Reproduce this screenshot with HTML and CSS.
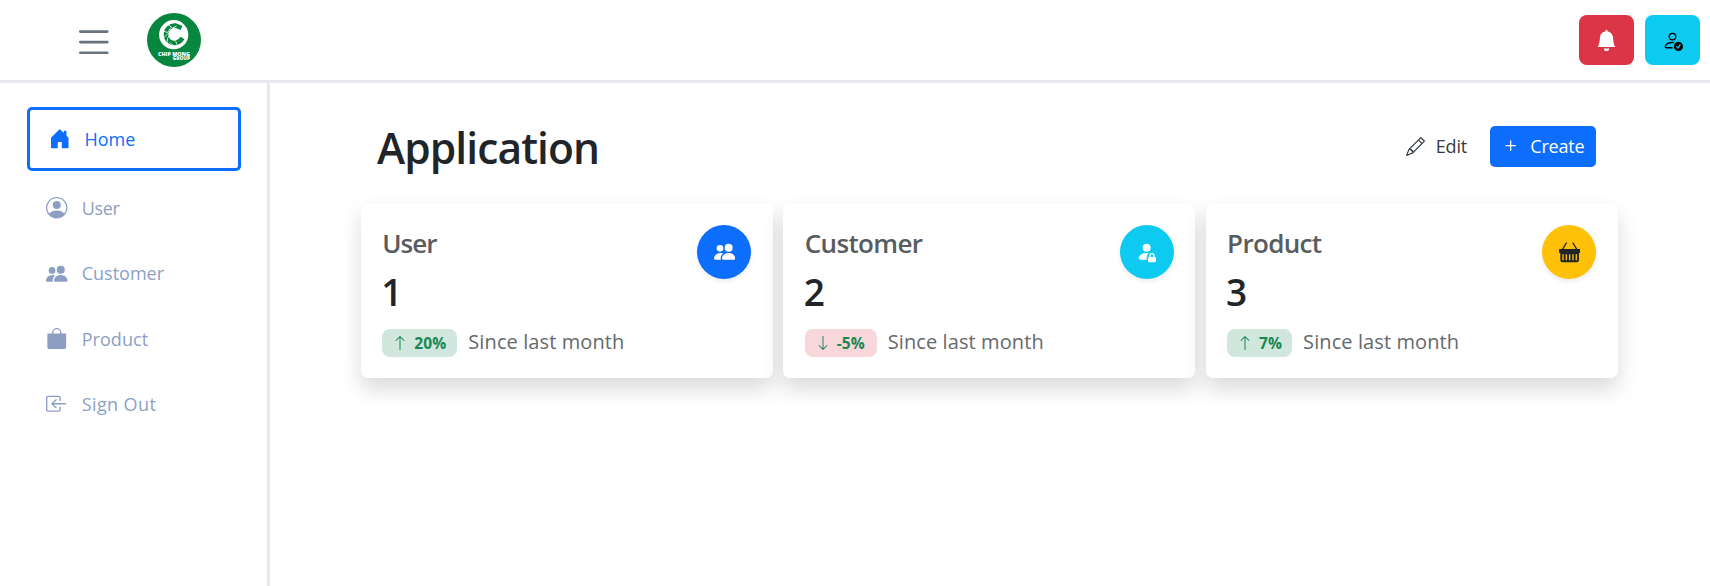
FILE: index.html
```html
<!DOCTYPE html>
<html lang="en">
<head>
<meta charset="utf-8">
<title>Application</title>
<link rel="stylesheet" href="styles.css">
</head>
<body>
<header class="topbar">
  <div class="brand">
    <svg class="menu" viewBox="0 0 30 24"><path d="M1.3 1.6h27M1.3 12.1h27M1.3 22.7h27" stroke="#68737f" stroke-width="2.6" stroke-linecap="round"/></svg>
    <svg class="logo" viewBox="0 0 54 54">
      <circle cx="27" cy="27" r="27" fill="#07863f"/>
      <circle cx="26.7" cy="21.700" r="14.600" fill="#fff"/>
      <path d="M34.500 15l-6-2.500c-5-.500-9.500 4-9.500 9 0 6 5 9.300 10 8.300 3.500-.500 5-2.500 6.500-4.800" fill="none" stroke="#07863f" stroke-width="4.600"/>
      <path d="M21 11.500l4.500 3.500 4-2M16 18l4.500 1.500 3.500-5M16.500 25l4.500-4.500M20 30.500l.500-5 2-3M27 33l-4.500-3.500M30 31.500l-1.500-4" fill="none" stroke="#fff" stroke-width=".8"/>
      <text x="11" y="43.200" class="logo-text" textLength="32" lengthAdjust="spacingAndGlyphs">CHIP MONG</text>
      <text x="25.700" y="47.300" class="logo-text" textLength="17.300" lengthAdjust="spacingAndGlyphs">GROUP</text>
    </svg>
  </div>
  <div class="actions">
    <button class="tile red"><svg viewBox="0 0 16 16"><path d="M8 16a2 2 0 0 0 2-2H6a2 2 0 0 0 2 2m.995-14.901a1 1 0 1 0-1.990 0A5 5 0 0 0 3 6c0 1.098-.5 6-2 7h14c-1.500-1-2-5.902-2-7 0-2.420-1.720-4.440-4.005-4.901"/></svg></button>
    <button class="tile cyan"><svg viewBox="0 0 16 16"><path d="M12.500 16a3.500 3.500 0 1 0 0-7 3.500 3.500 0 0 0 0 7m1.679-4.493-1.335 2.226a.75.75 0 0 1-1.174.144l-.774-.773a.5.5 0 0 1 .708-.708l.547.548 1.170-1.951a.5.5 0 1 1 .858.514M11 5a3 3 0 1 1-6 0 3 3 0 0 1 6 0M8 7a2 2 0 1 0 0-4 2 2 0 0 0 0 4"/><path d="M8.256 14a4.500 4.500 0 0 1-.229-1.004H3c.001-.246.154-.986.832-1.664C4.484 10.680 5.711 10 8 10q.390 0 .740.025c.226-.341.496-.650.804-.918Q8.844 9.002 8 9c-5 0-6 3-6 4s1 1 1 1z"/></svg></button>
  </div>
</header>
<div class="body">
  <nav class="sidebar">
    <a class="item active"><svg viewBox="0 0 16 16"><path d="M6.500 14.500v-3.505c0-.245.250-.495.500-.495h2c.250 0 .500.250.500.500v3.500a.5.5 0 0 0 .500.500h4a.5.5 0 0 0 .500-.500v-7a.5.5 0 0 0-.146-.354L13 5.793V2.500a.5.5 0 0 0-.500-.500h-1a.5.5 0 0 0-.500.500v1.293L8.354 1.146a.5.5 0 0 0-.708 0l-6 6A.5.5 0 0 0 1.500 7.500v7a.5.5 0 0 0 .500.500h4a.5.5 0 0 0 .500-.500"/></svg><span class="n-home">Home</span></a>
    <a class="item"><svg viewBox="0 0 16 16"><path d="M11 6a3 3 0 1 1-6 0 3 3 0 0 1 6 0"/><path fill-rule="evenodd" d="M0 8a8 8 0 1 1 16 0A8 8 0 0 1 0 8m8-7a7 7 0 0 0-5.468 11.370C3.242 11.226 4.805 10 8 10s4.757 1.225 5.468 2.370A7 7 0 0 0 8 1"/></svg><span class="n-user">User</span></a>
    <a class="item"><svg viewBox="0 0 16 16"><path d="M7 14s-1 0-1-1 1-4 5-4 5 3 5 4-1 1-1 1zm4-6a3 3 0 1 0 0-6 3 3 0 0 0 0 6m-5.784 6A2.240 2.240 0 0 1 5 13c0-1.355.680-2.750 1.936-3.720A6.300 6.300 0 0 0 5 9c-4 0-5 3-5 4s1 1 1 1zM4.500 8a2.500 2.500 0 1 0 0-5 2.500 2.500 0 0 0 0 5"/></svg><span class="n-cust">Customer</span></a>
    <a class="item"><svg viewBox="0 0 16 16"><path d="M8 1a2.500 2.500 0 0 1 2.500 2.500V4h-5v-.500A2.500 2.500 0 0 1 8 1m3.500 3v-.500a3.500 3.500 0 1 0-7 0V4H1v10a2 2 0 0 0 2 2h10a2 2 0 0 0 2-2V4z"/></svg><span class="n-prod">Product</span></a>
    <a class="item"><svg viewBox="0 0 16 16"><path fill-rule="evenodd" d="M10 3.500a.5.5 0 0 0-.500-.500h-8a.5.5 0 0 0-.500.500v9a.5.5 0 0 0 .500.500h8a.5.5 0 0 0 .500-.500v-2a.5.5 0 0 1 1 0v2A1.500 1.500 0 0 1 9.500 14h-8A1.500 1.500 0 0 1 0 12.500v-9A1.500 1.500 0 0 1 1.500 2h8A1.500 1.500 0 0 1 11 3.500v2a.5.5 0 0 1-1 0z"/><path fill-rule="evenodd" d="M4.146 8.354a.5.5 0 0 1 0-.708l3-3a.5.5 0 1 1 .708.708L5.707 7.500H14.500a.5.5 0 0 1 0 1H5.707l2.147 2.146a.5.5 0 0 1-.708.708z"/></svg><span class="n-sign">Sign Out</span></a>
  </nav>
  <main class="main">
    <div class="heading">
      <h1>Application</h1>
      <div class="tools">
        <button class="edit"><svg viewBox="0 0 16 16"><path d="M12.146.146a.5.5 0 0 1 .708 0l3 3a.5.5 0 0 1 0 .708l-10 10a.5.5 0 0 1-.168.110l-5 2a.5.5 0 0 1-.650-.650l2-5a.5.5 0 0 1 .110-.168zM11.207 2.500 13.500 4.793 14.793 3.500 12.500 1.207zm1.586 3L10.500 3.207 4 9.707V10h.500a.5.5 0 0 1 .500.500v.500h.500a.5.5 0 0 1 .500.500v.500h.293zm-9.761 5.175-.106.106-1.528 3.821 3.821-1.528.106-.106A.5.5 0 0 1 5 12.500V12h-.500a.5.5 0 0 1-.500-.500V11h-.500a.5.5 0 0 1-.468-.325"/></svg><span>Edit</span></button>
        <button class="create"><svg viewBox="0 0 16 16"><path d="M8 4a.5.5 0 0 1 .500.500v3h3a.5.5 0 0 1 0 1h-3v3a.5.5 0 0 1-1 0v-3h-3a.5.5 0 0 1 0-1h3v-3A.5.5 0 0 1 8 4"/></svg><span>Create</span></button>
      </div>
    </div>
    <div class="cards">
      <section class="card">
        <div class="info">
          <h2 class="t-user">User</h2>
          <div class="count">1</div>
          <div class="trend"><span class="badge up b1"><svg viewBox="0 0 16 16"><path d="M8 15a.5.5 0 0 0 .500-.500V2.707l3.146 3.147a.5.5 0 0 0 .708-.708l-4-4a.5.5 0 0 0-.708 0l-4 4a.5.5 0 1 0 .708.708L7.500 2.707V14.500a.5.5 0 0 0 .500.500"/></svg>20%</span><span class="since">Since last month</span></div>
        </div>
        <div class="disc blue"><svg viewBox="0 0 16 16"><path d="M7 14s-1 0-1-1 1-4 5-4 5 3 5 4-1 1-1 1zm4-6a3 3 0 1 0 0-6 3 3 0 0 0 0 6m-5.784 6A2.240 2.240 0 0 1 5 13c0-1.355.680-2.750 1.936-3.720A6.300 6.300 0 0 0 5 9c-4 0-5 3-5 4s1 1 1 1zM4.500 8a2.500 2.500 0 1 0 0-5 2.500 2.500 0 0 0 0 5"/></svg></div>
      </section>
      <section class="card">
        <div class="info">
          <h2 class="t-cust">Customer</h2>
          <div class="count">2</div>
          <div class="trend"><span class="badge down b2"><svg viewBox="0 0 16 16"><path d="M8 1a.5.5 0 0 1 .500.500v11.793l3.146-3.147a.5.5 0 0 1 .708.708l-4 4a.5.5 0 0 1-.708 0l-4-4a.5.5 0 0 1 .708-.708L7.500 13.293V1.500A.5.5 0 0 1 8 1"/></svg>-5%</span><span class="since">Since last month</span></div>
        </div>
        <div class="disc sky"><svg viewBox="0 0 16 16"><path d="M11 5a3 3 0 1 1-6 0 3 3 0 0 1 6 0m-9 8c0 1 1 1 1 1h5v-1a2 2 0 0 1 .010-.200 4.490 4.490 0 0 1 1.534-3.693Q8.844 9.002 8 9c-5 0-6 3-6 4m7 0a1 1 0 0 1 1-1v-1a2 2 0 1 1 4 0v1a1 1 0 0 1 1 1v2a1 1 0 0 1-1 1h-4a1 1 0 0 1-1-1zm3-3a1 1 0 0 0-1 1v1h2v-1a1 1 0 0 0-1-1"/></svg></div>
      </section>
      <section class="card">
        <div class="info">
          <h2 class="t-prod">Product</h2>
          <div class="count">3</div>
          <div class="trend"><span class="badge up b3"><svg viewBox="0 0 16 16"><path d="M8 15a.5.5 0 0 0 .500-.500V2.707l3.146 3.147a.5.5 0 0 0 .708-.708l-4-4a.5.5 0 0 0-.708 0l-4 4a.5.5 0 1 0 .708.708L7.500 2.707V14.500a.5.5 0 0 0 .500.500"/></svg>7%</span><span class="since">Since last month</span></div>
        </div>
        <div class="disc yellow"><svg viewBox="0 0 16 16"><path d="M5.757 1.071a.5.5 0 0 1 .172.686L3.383 6h9.234L10.070 1.757a.5.5 0 1 1 .858-.514L13.783 6H15.500a.5.5 0 0 1 .500.500v2a.5.5 0 0 1-.500.500H.500a.5.5 0 0 1-.500-.500v-2A.5.5 0 0 1 .500 6h1.717L5.070 1.243a.5.5 0 0 1 .686-.172z"/><path fill-rule="evenodd" d="M1 9h14v5a2 2 0 0 1-2 2H3a2 2 0 0 1-2-2zm1.500 1v4.500h1V10zm2.500 0v4.500h1V10zm2.500 0v4.500h1V10zm2.500 0v4.500h1V10zm2.500 0v4.500h1V10z"/></svg></div>
      </section>
    </div>
  </main>
</div>
</body>
</html>
```
FILE: styles.css
```css
* { box-sizing: border-box; }
body { margin: 0; height: 586px; overflow: hidden; display: flex; flex-direction: column; background: #fff; color: #212529; font-family: "Open Sans", "Noto Sans", sans-serif; }
svg { display: block; flex: none; fill: currentColor; }
button { border: 0; background: none; padding: 0; font: inherit; color: inherit; }
h1, h2 { margin: 0; font-weight: 560; }

.topbar { flex: none; height: 82px; border-bottom: 2px solid #e6e6ef; box-shadow: 0 1px 1px #ececf4; display: flex; justify-content: space-between; align-items: flex-start; padding: 0 10px 0 79px; }
.brand { display: flex; gap: 38px; padding-top: 13px; }
.menu { width: 30px; height: 24px; margin-top: 17px; }
.logo { width: 54px; height: 54px; }
.logo-text { font-size: 5px; font-weight: 800; fill: #fff; }
.actions { display: flex; gap: 11px; padding-top: 15px; }
.tile { width: 55px; height: 50px; border-radius: 8px; display: flex; align-items: center; justify-content: center; }
.tile svg { width: 21px; height: 21px; }
.red { background: #dc3545; color: #fff; }
.cyan { background: #0dcaf0; color: #000; }

.body { flex: 1; display: flex; }
.sidebar { width: 269px; border-right: 2px solid #e6e6ef; box-shadow: 1px 0 1px #ececf4; padding: 25px 26.500px 0 27px; display: flex; flex-direction: column; }
.item { height: 65.300px; padding-left: 19.200px; display: flex; align-items: center; gap: 14px; color: #8c9fc3; font-size: 18px; line-height: 24px; white-space: nowrap; }
.item svg { width: 21.500px; height: 21.500px; }
.active { height: 64px; margin-bottom: 4.500px; padding-left: 19px; border: 3px solid #0d6efd; border-radius: 5px; color: #0d6efd; }
.n-user { letter-spacing: -.3px; }
.n-prod { letter-spacing: .05px; }
.n-sign { letter-spacing: .4px; }

.main { flex: 1; padding: 32px 92.500px 0 92px; }
.heading { height: 90px; padding: 0 21.500px 0 16px; display: flex; justify-content: space-between; align-items: flex-start; }
h1 { font-size: 42.500px; line-height: 67px; letter-spacing: -.9px; }
.tools { display: flex; gap: 23px; padding-top: 11.500px; font-size: 18px; }
.edit, .create { height: 41px; display: flex; align-items: center; }
.edit { gap: 11px; color: #343a40; }
.edit svg { width: 19px; height: 19px; }
.create { width: 106px; padding-left: 10px; gap: 9px; border-radius: 5px; background: #0d6efd; color: #fff; }
.create svg { width: 21.300px; height: 21.300px; }
.edit span, .create span { letter-spacing: -.2px; }

.cards { display: grid; grid-template-columns: repeat(3, 1fr); gap: 10.700px; }
.card { height: 174px; padding: 21px 21.300px; border-radius: 7px; background: #fff; box-shadow: 0 10.700px 21.300px rgba(0,0,0,.15); display: flex; justify-content: space-between; }
h2 { font-size: 26px; line-height: 36px; color: #595c5f; letter-spacing: -.65px; }
.t-user { letter-spacing: -1px; }
.count { font-size: 37px; font-weight: 580; line-height: 48px; margin-top: 7px; height: 48px; margin-left: -1px; }
.trend { display: flex; align-items: center; gap: 11px; height: 28px; margin-top: 13px; }
.badge { height: 28px; border-radius: 8px; display: flex; align-items: center; gap: 6px; padding-left: 10px; font-size: 15.500px; font-weight: 700; color: #198754; letter-spacing: .1px; }
.badge svg { width: 16px; height: 16px; }
.b1 { width: 75px; }
.b2 { width: 72px; }
.b3 { width: 65px; }
.up { background: #d1e7dd; }
.down { background: #f8d7da; }
.since { font-size: 20px; line-height: 28px; padding-bottom: 2px; letter-spacing: .1px; color: #66696c; white-space: nowrap; }
.disc { width: 54px; height: 54px; border-radius: 50%; display: flex; align-items: center; justify-content: center; box-shadow: 0 2.600px 5.300px rgba(0,0,0,.08); }
.disc svg { width: 21.300px; height: 21.300px; }
.blue { background: #0d6efd; color: #fff; }
.sky { background: #0dcaf0; color: #fff; }
.yellow { background: #ffc107; color: #212529; }
```
